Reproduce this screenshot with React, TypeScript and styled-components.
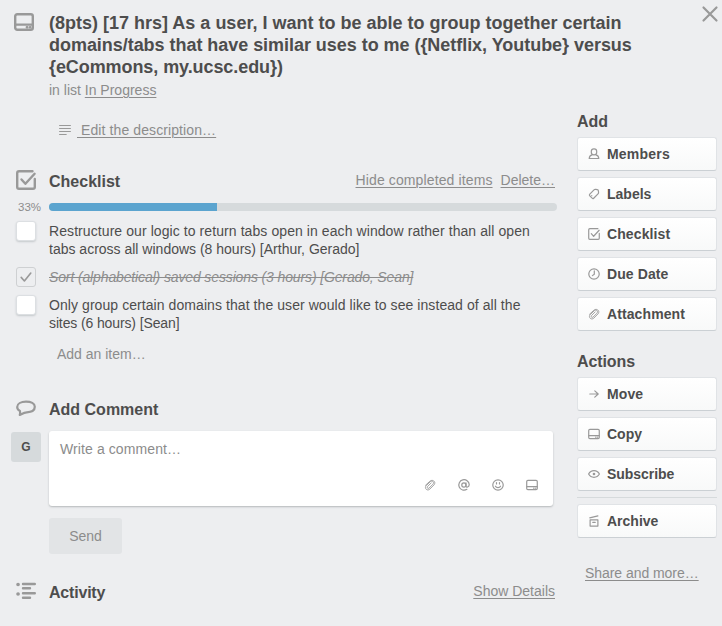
import React from 'react';
import styled, { createGlobalStyle, css } from 'styled-components';

const GlobalStyle = createGlobalStyle`
  * { box-sizing: border-box; }
  body {
    margin: 0;
    background: #edeef0;
    color: #4d4d4d;
    font: 14px/18px "Liberation Sans", Arial, sans-serif;
    overflow: hidden;
  }
  button, textarea { font: inherit; color: inherit; }
`;

const gray = '#8c8c8c';

const Dialog = styled.div`
  display: flex;
  gap: 20px;
  width: 722px;
  height: 626px;
  position: relative;
`;
const Main = styled.main`
  width: 557px;
  display: flex;
  flex-direction: column;
`;
const Sidebar = styled.aside`
  width: 140px;
  padding-top: 112px;
`;
const Row = styled.div<{ $top?: number }>`
  display: grid;
  grid-template-columns: 49px 1fr;
  margin-top: ${(p) => p.$top ?? 0}px;
`;
const IconCell = styled.div<{ $left: number; $top?: number }>`
  margin-top: ${(p) => p.$top ?? 0}px;
  padding-left: ${(p) => p.$left}px;
  height: 0;
`;
const Svg = styled.svg<{ $size: number }>`
  display: block;
  flex: none;
  width: ${(p) => p.$size}px;
  height: ${(p) => p.$size}px;
  overflow: visible;
  fill: none;
  stroke: #999;
  stroke-linecap: round;
  stroke-linejoin: round;
`;
const CloseButton = styled.button`
  position: absolute;
  top: 4px;
  right: 2px;
  padding: 0;
  border: 0;
  background: none;
`;
const Title = styled.h2`
  margin: 0;
  font-size: 18px;
  line-height: 22px;
  white-space: nowrap;
`;
const Line = styled.span<{ $spacing?: number }>`
  display: block;
  white-space: nowrap;
  letter-spacing: ${(p) => p.$spacing ?? 0}px;
`;
const ListInfo = styled.p`
  margin: 3px 0 0;
  color: ${gray};
`;
const Link = styled.a<{ $spacing?: number }>`
  color: ${gray};
  text-decoration: underline;
  text-underline-offset: 2px;
  text-decoration-thickness: 1px;
  white-space: pre;
  letter-spacing: ${(p) => p.$spacing ?? 0}px;
`;
const Description = styled.div`
  display: flex;
  align-items: center;
  gap: 6px;
  margin: 22px 0 0 59px;
`;
const SectionHead = styled.div`
  display: flex;
  justify-content: space-between;
  height: 20px;
  padding-right: 2px;
`;
const Heading = styled.h3<{ $spacing?: number }>`
  margin: 0;
  font-size: 16px;
  line-height: 20px;
  letter-spacing: ${(p) => p.$spacing ?? 0}px;
`;
const SectionHeading = styled(Heading)`
  height: 20px;
  line-height: 22px;
`;
const HeadLinks = styled.div`
  display: flex;
  gap: 8px;
`;
const Percent = styled.span`
  padding-left: 18px;
  font-size: 11.5px;
  line-height: 8px;
  color: ${gray};
`;
const Track = styled.div`
  height: 8px;
  border-radius: 4px;
  background: #d6dadc;
  overflow: hidden;
`;
const Fill = styled.div`
  width: 33%;
  height: 100%;
  background: #5ba4cf;
`;
const Checkbox = styled.span<{ $done?: boolean }>`
  display: flex;
  align-items: center;
  justify-content: center;
  width: 20px;
  height: 20px;
  border-radius: 3px;
  ${(p) =>
    p.$done
      ? css`border: 1px solid #ced0d2;`
      : css`
          background: #fff;
          border: 1px solid #dcdfe2;
          box-shadow: 0 1px 2px #c5c9cc;
        `}
`;
const ItemText = styled.div<{ $done?: boolean }>`
  ${(p) =>
    p.$done &&
    css`
      color: ${gray};
      font-style: italic;
      text-decoration: line-through;
    `}
`;
const AddItem = styled.div`
  margin: 13px 0 0 57px;
  color: ${gray};
`;
const Avatar = styled.div`
  display: flex;
  align-items: center;
  justify-content: center;
  width: 30px;
  height: 30px;
  margin: 1px 0 0 11px;
  border-radius: 3px;
  background: #d6dadc;
  font-size: 12px;
  font-weight: bold;
`;
const CommentBox = styled.div`
  display: flex;
  flex-direction: column;
  justify-content: space-between;
  width: 504px;
  height: 75px;
  padding: 9px 15px 15px 11px;
  border-radius: 3px;
  background: #fff;
  box-shadow: 0 1px 2px #b5b8ba;
  color: ${gray};
`;
const Tools = styled.div`
  display: flex;
  justify-content: flex-end;
  gap: 22px;
`;
const SendButton = styled.button`
  width: 73px;
  height: 36px;
  margin: 12px 0 0 49px;
  border: 0;
  border-radius: 3px;
  background: #e2e4e6;
  color: ${gray};
`;
const Buttons = styled.div`
  display: grid;
  gap: 6px;
  margin: 5px 0 21px;
`;
const ActionButton = styled.button<{ $spacing?: number }>`
  display: flex;
  align-items: center;
  gap: 7px;
  height: 34px;
  padding: 0 10px;
  border: 1px solid #e0e3e6;
  border-bottom-color: #cbd0d4;
  border-radius: 3px;
  background: linear-gradient(#fff, #f8f9f9);
  font-weight: bold;
  letter-spacing: ${(p) => p.$spacing ?? 0}px;
`;
const Divider = styled.hr`
  width: 100%;
  height: 1px;
  margin: 0;
  border: 0;
  background: #d6dadc;
`;
const ShareRow = styled.div`
  margin: 26px 0 0 8px;
`;

const shapes = {
  card: (
    <>
      <rect x="1.2" y="2.2" width="17.6" height="15.6" rx="2" />
      <path d="M1.5 12.6h17" />
      <path d="M12.8 15.3h.6M16 15.3h.3" />
    </>
  ),
  check: (
    <>
      <path d="M16.5 1.2H3a1.8 1.8 0 0 0-1.8 1.8v14A1.8 1.8 0 0 0 3 18.8h14a1.8 1.8 0 0 0 1.8-1.8V9" />
      <path d="m5.5 9.5 3.9 4.3L18.6 3.8" />
    </>
  ),
  tick: <path d="m4 10.5 4 4.5 8-10" />,
  lines: <path d="M1 2.5h18M1 7.5h18M1 12.5h18M1 17.5h11" />,
  bubble: (
    <path d="M10 2.7c5 0 8.8 1.9 8.8 5.1s-3 5.3-8 5.500c-2.300.1-4 1.100-7 2.600.5-1.600.4-2.900.1-4C2.200 10.900 1.200 9.700 1.200 7.900 1.200 4.700 5 2.700 10 2.700Z" />
  ),
  activity: (
    <>
      <path d="M7 3h11.800M7 7.300h7M7 12.300h11.800M7 16.800h7" />
      <path d="M2 3.500h.1M2 13h.1" strokeWidth="3.600" />
    </>
  ),
  close: <path d="m3.500 3.500 13 13m0-13-13 13" />,
  member: (
    <>
      <rect x="5.500" y="1.500" width="9" height="10" rx="4.300" />
      <path d="M6.800 11.500C4 12 2.300 14 2 17.500h16c-.3-3.500-2-5.500-4.800-6" />
    </>
  ),
  label: (
    <>
      <path d="m3 10.200 7-7c.8-.8 1.600-.9 2.700-.8l2.700.2c1 .1 1.800.9 1.900 1.900l.3 3c.1 1-.2 1.700-.9 2.400l-7.200 7.100c-.8.8-1.800.8-2.600 0L3 13c-.8-.8-.8-2 0-2.800Z" />
      <path d="M6.200 12.800h.1" />
    </>
  ),
  clock: (
    <>
      <circle cx="10" cy="10" r="8.700" />
      <path d="M10.500 4.800v5.700l-3.200 2.200" />
    </>
  ),
  clip: (
    <path
      strokeWidth="1.500"
      d="M2.500 10.500 9.700 3.800C14.500-.5 21 5.200 16.500 10l-6.700 6.800C5.500 21-.3 15.300 3.800 11l6.700-6.500c3.300-3 7.300 1 4.300 4.200l-6.200 6.300c-2 1.900-4.500-.5-2.600-2.500l6-6"
    />
  ),
  arrow: <path d="M3 10h14M11.300 4.700 17 10l-5.700 5.300" />,
  eye: (
    <>
      <path d="M1 10c4-7.300 14-7.300 18 0-4 7.300-14 7.300-18 0Z" />
      <circle cx="10" cy="10" r="1.200" />
    </>
  ),
  archive: <path d="M3.500 8h13v10.500h-13zM8 12.300h4M3 4.800 16.500 1.500" />,
  at: (
    <>
      <circle cx="9.800" cy="10" r="3.500" />
      <path d="M13.300 6.500v5.300c0 2.700 5.400 2.200 5.400-2.500A8.700 8.700 0 1 0 14.800 17.200" />
    </>
  ),
  smile: (
    <>
      <circle cx="10" cy="10" r="8.700" />
      <path d="M7.500 5.800v2.500M12.500 5.800v2.500M5.800 12c1.600 3.200 6.800 3.200 8.400 0" />
    </>
  ),
};

type IconName = keyof typeof shapes;

function Icon({ name, size = 12, weight = 2 }: { name: IconName; size?: number; weight?: number }) {
  return (
    <Svg $size={size} viewBox="0 0 20 20" strokeWidth={weight} aria-hidden="true">
      {shapes[name]}
    </Svg>
  );
}

type ActionData = { icon: IconName; label: string; spacing?: number };
const addActions: ActionData[] = [
  { icon: 'member', label: 'Members', spacing: 0.2 },
  { icon: 'label', label: 'Labels' },
  { icon: 'check', label: 'Checklist', spacing: 0.1 },
  { icon: 'clock', label: 'Due Date', spacing: 0.1 },
  { icon: 'clip', label: 'Attachment', spacing: 0.1 },
];
const cardActions: ActionData[] = [
  { icon: 'arrow', label: 'Move', spacing: 0.1 },
  { icon: 'card', label: 'Copy' },
  { icon: 'eye', label: 'Subscribe', spacing: -0.05 },
];
const items = [
  {
    top: 11,
    done: false,
    lines: [
      { text: 'Restructure our logic to return tabs open in each window rather than all open', spacing: 0.08 },
      { text: 'tabs across all windows (8 hours) [Arthur, Gerado]' },
    ],
  },
  {
    top: 10,
    done: true,
    lines: [{ text: 'Sort (alphabetical) saved sessions (3 hours) [Gerado, Sean]', spacing: -0.13 }],
  },
  {
    top: 10,
    done: false,
    lines: [
      { text: 'Only group certain domains that the user would like to see instead of all the', spacing: 0.07 },
      { text: 'sites (6 hours) [Sean]', spacing: -0.12 },
    ],
  },
];

function Action({ icon, label, spacing }: ActionData) {
  return (
    <ActionButton $spacing={spacing}>
      <Icon name={icon} />
      {label}
    </ActionButton>
  );
}

export default function App() {
  return (
    <>
      <GlobalStyle />
      <Dialog>
        <Main>
          <Row $top={12}>
            <IconCell $left={14}><Icon name="card" size={20} weight={2.4} /></IconCell>
            <div>
              <Title>
                <Line>(8pts) [17 hrs] As a user, I want to be able to group together certain</Line>
                <Line $spacing={-0.04}>{'domains/tabs that have similar uses to me ({Netflix, Youtube} versus'}</Line>
                <Line $spacing={-0.08}>{'{eCommons, my.ucsc.edu})'}</Line>
              </Title>
              <ListInfo>in list <Link>In Progress</Link></ListInfo>
            </div>
          </Row>
          <Description>
            <Icon name="lines" />
            <Link $spacing={0.1}> Edit the description…</Link>
          </Description>
          <Row $top={32}>
            <IconCell $left={16} $top={-1}><Icon name="check" size={20} weight={2.4} /></IconCell>
            <SectionHead>
              <SectionHeading>Checklist</SectionHeading>
              <HeadLinks>
                <Link $spacing={0.12}>Hide completed items</Link>
                <Link>Delete…</Link>
              </HeadLinks>
            </SectionHead>
          </Row>
          <Row $top={12}>
            <Percent>33%</Percent>
            <Track><Fill /></Track>
          </Row>
          {items.map((item) => (
            <Row key={item.lines[0].text} $top={item.top}>
              <IconCell $left={16} $top={-1}>
                <Checkbox $done={item.done}>{item.done && <Icon name="tick" size={16} weight={2} />}</Checkbox>
              </IconCell>
              <ItemText $done={item.done}>
                {item.lines.map((line) => <Line key={line.text} $spacing={line.spacing}>{line.text}</Line>)}
              </ItemText>
            </Row>
          ))}
          <AddItem>Add an item…</AddItem>
          <Row $top={36}>
            <IconCell $left={16}><Icon name="bubble" size={20} weight={2.2} /></IconCell>
            <SectionHeading>Add Comment</SectionHeading>
          </Row>
          <Row $top={12}>
            <Avatar>G</Avatar>
            <CommentBox>
              <Line $spacing={0.1}>Write a comment…</Line>
              <Tools>
                <Icon name="clip" />
                <Icon name="at" />
                <Icon name="smile" />
                <Icon name="card" />
              </Tools>
            </CommentBox>
          </Row>
          <SendButton>Send</SendButton>
          <Row $top={28}>
            <IconCell $left={16} $top={-1}><Icon name="activity" size={20} weight={2.4} /></IconCell>
            <SectionHead>
              <SectionHeading $spacing={-0.2}>Activity</SectionHeading>
              <Link>Show Details</Link>
            </SectionHead>
          </Row>
        </Main>
        <Sidebar>
          <Heading>Add</Heading>
          <Buttons>
            {addActions.map((action) => <Action key={action.label} {...action} />)}
          </Buttons>
          <Heading $spacing={-0.1}>Actions</Heading>
          <Buttons>
            {cardActions.map((action) => <Action key={action.label} {...action} />)}
            <Divider />
            <Action icon="archive" label="Archive" />
          </Buttons>
          <ShareRow><Link $spacing={-0.05}>Share and more…</Link></ShareRow>
        </Sidebar>
        <CloseButton aria-label="Close"><Icon name="close" size={20} weight={2.2} /></CloseButton>
      </Dialog>
    </>
  );
}
